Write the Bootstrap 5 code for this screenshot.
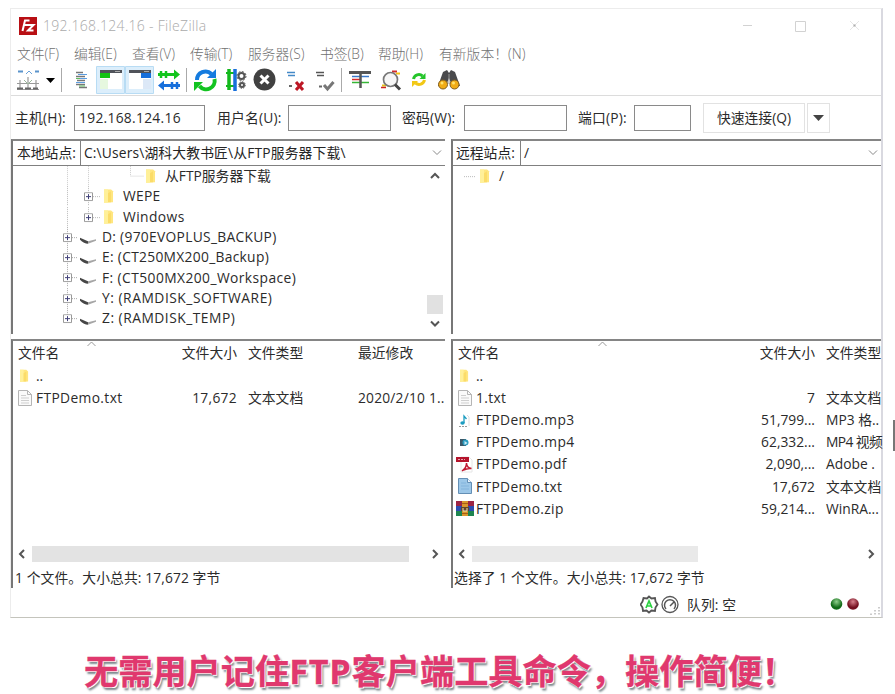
<!DOCTYPE html>
<html lang="zh-CN">
<head>
<meta charset="utf-8">
<meta name="viewport" content="width=device-width, initial-scale=1">
<title>FileZilla</title>
<link href="https://cdn.jsdelivr.net/npm/bootstrap@5.3.0/dist/css/bootstrap.min.css" rel="stylesheet">
<style>
body{width:895px;height:694px;overflow:hidden;background:#fff;color:#2b2b2b;font-family:"Open Sans","Noto Sans CJK SC",sans-serif;font-size:13.8px;line-height:20px;white-space:nowrap}
svg{display:block;flex:none}
.stage{padding:8px 0 0 10px}
.win{width:873px;height:610px;border:1px solid #ececec;border-right:2px solid #d9d9e0;border-bottom-color:#c4c4bc}
.titlebar{height:32px;padding:2px 20px 0 8px;color:#aaa;font-weight:300;font-size:14px}
.menus{height:24px;padding:1px 0 0 6px;color:#707070;font-size:13.8px;font-weight:300}
.menus span{flex:none}
.tools{height:31px;border-bottom:1px solid #dcdcdc}
.quick{height:43px;color:#2b2b2b}
.field{border:1px solid #8a8a8a;height:26px;flex:none;padding-left:4px;line-height:23px}
.qbtn{border:1px solid #e2e2e2;height:30px;border-radius:0;padding:0;font-size:13.8px;line-height:28px;color:#2b2b2b;background:#fff}
.lp{width:434px}.rp{width:430px}
.pane{border-left:2px solid #777;border-top:2px solid #858585}
.upper{height:195px}
.lower{height:249px;margin-top:5px}
.site{height:25px;border-bottom:1px solid #808080;color:#252525}
.sitelabel{width:68px;border-right:1px solid #808080;padding-left:4px;height:25px;line-height:24px}
.treerow{height:20.3px}
.treerow span{letter-spacing:.3px}
.treerow span.wide{letter-spacing:.43px}
.listrow{height:22.1px}
.hd{height:23px;margin-bottom:1px}
.tag{color:#e0386e;font-weight:700;font-size:34.2px;line-height:44px;padding-left:84px;margin-top:31px;-webkit-text-stroke:.3px #e0386e;text-shadow:1px 1px 0 #fff,-1px 0 0 #fff,2px 3px 2px #7f8b90}
.num{text-align:right}
.thumb{background:#e3e3e3}
.fn{width:277px;letter-spacing:.35px;flex:none}
.fs{width:62px;flex:none}
.ft{margin-left:11px;flex:none}
.edge{right:0;top:420px;width:2px;height:31px;background:#777}
</style>
<script src="https://cdn.jsdelivr.net/npm/bootstrap@5.3.0/dist/js/bootstrap.bundle.min.js"></script>
</head>
<body class="position-relative">
<svg width="0" height="0" class="position-absolute">
<defs>
<symbol id="folder" viewBox="0 0 10 14"><path d="M0 0h7l2 2v11l-9 .5z" fill="#ffe680"/><path d="M0 0h4v13.5H0z" fill="#fff099"/><path d="M4 4l3-2v11H4z" fill="#fbdc69"/></symbol>
<symbol id="plus" viewBox="0 0 9 9"><path d="M.5.5h8v8h-8z" fill="#fff" stroke="#999"/><path d="M2 4.5h5M4.500 2v5" stroke="#414178"/></symbol>
<symbol id="drive" viewBox="0 0 17 8"><path d="M0 1.500l8 3.500v2.500q-4 0-8-4z" fill="#464646"/><path d="M8 5L16 3v1.500L8 7.500z" fill="#a6a6a6"/></symbol>
<symbol id="doc" viewBox="0 0 14 16"><path d="M.5.5h9l4 4v11H.5z" fill="#fafafa" stroke="#b5b5b5"/><path d="M9.500.5v4h4" fill="none" stroke="#b5b5b5"/><path d="M3 5.500h5M3 8h8M3 10.500h8M3 13h8" stroke="#cfcfcf"/></symbol>
</defs>
</svg>
<div class="stage"><div class="win">
<div class="titlebar d-flex align-items-center">
<svg width="18" height="18"><path fill="#b80f14" d="M0 0h18v18H0z"/><path d="M10.500 3.500H6L3.500 14M5 8h4M9 8h5.500L9 13.500h5.500" fill="none" stroke="#fff" stroke-width="2"/></svg>
<span style="letter-spacing:.3px;margin-left:6px">192.168.124.16 - FileZilla</span>
<svg class="ms-auto" width="118" height="14"><g fill="none" stroke="#d2d2d2"><path d="M0 6.500h9M52.500 2.500h10v10h-10z"/><path d="M107 2l9 9M116 2l-9 9" stroke="#e6e6e6"/></g><path d="M110.500 5.500h2v2h-2z" fill="#aaa"/></svg>
</div>
<div class="menus d-flex align-items-center">
<span style="width:57px">文件(F)</span><span style="width:58px">编辑(E)</span><span style="width:58px">查看(V)</span><span style="width:58px">传输(T)</span><span style="width:72px">服务器(S)</span><span style="width:58px">书签(B)</span><span style="width:61px">帮助(H)</span><span>有新版本！(N)</span>
</div>
<div class="tools">
<svg width="460" height="30" viewBox="11 65 460 30">
<g stroke="#777" fill="none"><path d="M18 71.500h5M35 71.500h4" stroke="#5b94cc" stroke-width="2"/><path d="M26 74l3-3 3 3" stroke="#68a0d8"/><path d="M17 83.500h22M17 89.500h22M20 80v9M28 77v12M36 80v9" stroke="#999" stroke-width="1.200"/><path d="M17 88.500h6M25 88.500h6M33 88.500h5" stroke="#666" stroke-width="2"/><path d="M24 80l4 4 4-4" stroke="#9ab89a"/></g>
<path d="M46 78h9l-4.500 5z" fill="#000"/>
<path d="M61.500 68v24M186.500 68v24M341.500 68v24" stroke="#aaa"/>
<path d="M76 72.500h7M76 76.500h9M77 80.500h8M76 84.500h9M79 87.500h8" stroke="#777" stroke-width="1.500"/><path d="M78 74.500h9M80 78.500h7M76 82.500h9" stroke="#5b9de0"/><path d="M76 78.500h4M79 86h6" stroke="#62bd62"/>
<path d="M96.500 66.500h28v27h-28zM125.500 66.500h28v27h-28z" fill="#dceefb" stroke="#b8dcf4"/>
<path d="M100 71h22v18h-22z" fill="#fff"/><path d="M100 70h22v3h-22z" fill="#50535a"/><path d="M100 73h10v5h-10z" fill="#13c313"/><path d="M100 79h8v10h-8z" fill="#e6f8df"/><path d="M115 71.500h5" stroke="#aaa"/>
<path d="M129 71h22v18h-22z" fill="#fff"/><path d="M129 70h22v3h-22z" fill="#50535a"/><path d="M141 73h10v5h-10z" fill="#176fdb"/><path d="M143 79h8v10h-8z" fill="#dce8f7"/><path d="M144 71.500h5" stroke="#aaa"/>
<path d="M158 73h16v-3.500l6 5-6 5V76h-16z" fill="#12c51c"/><path d="M180 84h-16v-3.500l-6 5 6 5V87h16z" fill="#176fdb"/><path d="M161 71v7M166 71v7" stroke="#12c51c" stroke-width="2.500"/><path d="M172 82v7M177 82v7" stroke="#176fdb" stroke-width="2.500"/>
<g fill="none" stroke-width="4"><path d="M197 80a8.500 8.500 0 0 1 14.500-6" stroke="#147bdf"/><path d="M214.500 79a8.500 8.500 0 0 1-15 7" stroke="#13c321"/></g><path d="M216 69v9h-9z" fill="#147bdf"/><path d="M194 91v-9h9z" fill="#13c321"/>
<path d="M229 69v21" stroke="#13b91c" stroke-width="3.500"/><path d="M226 73h8M226 86h8" stroke="#13b91c" stroke-width="2"/><path d="M235 69v22" stroke="#176fdb" stroke-width="3.500"/><g fill="none" stroke="#555"><circle cx="241.500" cy="76" r="3" stroke-width="2"/><circle cx="241.500" cy="76" r="4.500" stroke-dasharray="2 1.500"/><circle cx="242" cy="85" r="2" stroke-width="2"/><circle cx="242" cy="85" r="3.300" stroke-dasharray="1.500 1"/></g>
<circle cx="264.500" cy="79.500" r="11" fill="#414141"/><path d="M260.500 75.500l8 8M268.500 75.500l-8 8" stroke="#fff" stroke-width="3"/>
<path d="M287 72.500h8M288 75.500h7" stroke="#4389c7" stroke-width="1.300"/><path d="M289 86h3" stroke="#666" stroke-width="2"/><path d="M296 82l7 8M303 82l-7 8" stroke="#bd1725" stroke-width="3"/>
<path d="M316 72.500h8M317 75.500h7" stroke="#555" stroke-width="1.300"/><path d="M319 86.500h3" stroke="#666" stroke-width="2"/><path d="M324 85l3.500 4 6-7" fill="none" stroke="#777" stroke-width="3"/>
<path d="M349 72.500h22" stroke="#555" stroke-width="3"/><path d="M352 76.500h17" stroke="#3978c9" stroke-width="1.500"/><path d="M352 79.500h9" stroke="#d42b2b" stroke-width="1.500"/><path d="M352 82.500h17" stroke="#36b635" stroke-width="1.500"/><path d="M360.500 73v15" stroke="#555" stroke-width="2.500"/>
<path d="M392 71.500h5" stroke="#d02c2c" stroke-width="2"/><path d="M396 73.500h4" stroke="#f4c315" stroke-width="2"/><path d="M382 85.500h4" stroke="#e3c31a" stroke-width="2"/><path d="M381 87.500h5" stroke="#c22" stroke-width="1.500"/><circle cx="390.500" cy="79.500" r="7" fill="#f6f6f6" stroke="#777" stroke-width="1.700"/><path d="M395 84.500l5 5" stroke="#444" stroke-width="3"/>
<g fill="none" stroke-width="3"><path d="M413.500 79a5.500 5.500 0 0 1 9-3" stroke="#24c52a"/><path d="M424.500 80a5.500 5.500 0 0 1-9 3" stroke="#f2c815"/></g><path d="M425.500 73v6h-6z" fill="#24c52a"/><path d="M412 87v-6h6z" fill="#f2c815"/>
<path d="M443 72l4-2 2 3 2-3 4 2 5 14h-8l-3-8-3 8h-8z" fill="#4a4a4d"/><path d="M449 74v10" stroke="#999"/><circle cx="443" cy="84.500" r="4.500" fill="#f1ac16" stroke="#805d21"/><circle cx="454.500" cy="84.500" r="4.500" fill="#f1ac16" stroke="#805d21"/><circle cx="442" cy="83" r="1.500" fill="#ffe36e"/><circle cx="453.500" cy="83" r="1.500" fill="#ffe36e"/>
</svg>
</div>
<div class="quick d-flex align-items-center">
<span class="ps-1" style="width:63px;letter-spacing:.2px">主机(H):</span><span class="field" style="width:131px;letter-spacing:.3px">192.168.124.16</span>
<span style="width:83px;padding-left:12px;letter-spacing:.2px">用户名(U):</span><span class="field" style="width:103px"></span>
<span style="width:73px;padding-left:11px;letter-spacing:.2px">密码(W):</span><span class="field" style="width:103px"></span>
<span style="width:67px;padding-left:11px;letter-spacing:.2px">端口(P):</span><span class="field" style="width:57px"></span>
<button class="btn qbtn" style="width:102px;margin-left:12px">快速连接(Q)</button><button class="btn qbtn d-flex align-items-center justify-content-center" style="width:23px;margin-left:2px"><svg width="11" height="6"><path d="M0 0h11L5.500 6z" fill="#444"/></svg></button>
</div>
<div class="d-flex" style="gap:6px">
<div class="lp">
 <div class="pane upper">
  <div class="site d-flex align-items-center"><span class="sitelabel">本地站点:</span><span style="padding-left:3px;letter-spacing:.15px">C:\Users\湖科大教书匠\从FTP服务器下载\</span><svg class="ms-auto" style="margin-right:3px" width="10" height="6"><path d="M1 .5l4 4 4-4" fill="none" stroke="#888"/></svg></div>
  <div class="d-flex justify-content-between">
   <div>
    <div class="treerow d-flex align-items-center"><svg width="152" height="20.300" viewBox="13 0 152 20"><path d="M67.500 0v20M88.500 0v20M130.500 0v10h14" fill="none" stroke="#ccc" stroke-dasharray="1 1"/><use href="#folder" x="146" y="3" width="10" height="14"/></svg>从FTP服务器下载</div>
    <div class="treerow d-flex align-items-center"><svg width="110" height="20.300" viewBox="13 0 110 20"><path d="M67.500 0v20M88.500 0v20M93 10.500h7" stroke="#bbb" stroke-dasharray="1 1"/><use href="#plus" x="84" y="6" width="9" height="9"/><use href="#folder" x="104" y="3" width="10" height="14"/></svg><span>WEPE</span></div>
    <div class="treerow d-flex align-items-center"><svg width="110" height="20.300" viewBox="13 0 110 20"><path d="M67.500 0v20M88.500 0v10M93 10.500h7" stroke="#bbb" stroke-dasharray="1 1"/><use href="#plus" x="84" y="6" width="9" height="9"/><use href="#folder" x="104" y="3" width="10" height="14"/></svg><span class="wide">Windows</span></div>
    <div class="treerow d-flex align-items-center"><svg width="89" height="20.300" viewBox="13 0 89 20"><path d="M67.500 0v20M72 10.500h6" stroke="#aaa" stroke-dasharray="1 1"/><use href="#plus" x="63" y="6" width="9" height="9"/><use href="#drive" x="80" y="9" width="17" height="8"/></svg><span>D: (970EVOPLUS_BACKUP)</span></div>
    <div class="treerow d-flex align-items-center"><svg width="89" height="20.300" viewBox="13 0 89 20"><path d="M67.500 0v20M72 10.500h6" stroke="#aaa" stroke-dasharray="1 1"/><use href="#plus" x="63" y="6" width="9" height="9"/><use href="#drive" x="80" y="9" width="17" height="8"/></svg><span>E: (CT250MX200_Backup)</span></div>
    <div class="treerow d-flex align-items-center"><svg width="89" height="20.300" viewBox="13 0 89 20"><path d="M67.500 0v20M72 10.500h6" stroke="#aaa" stroke-dasharray="1 1"/><use href="#plus" x="63" y="6" width="9" height="9"/><use href="#drive" x="80" y="9" width="17" height="8"/></svg><span class="wide">F: (CT500MX200_Workspace)</span></div>
    <div class="treerow d-flex align-items-center"><svg width="89" height="20.300" viewBox="13 0 89 20"><path d="M67.500 0v20M72 10.500h6" stroke="#aaa" stroke-dasharray="1 1"/><use href="#plus" x="63" y="6" width="9" height="9"/><use href="#drive" x="80" y="9" width="17" height="8"/></svg><span style="letter-spacing:.53px">Y: (RAMDISK_SOFTWARE)</span></div>
    <div class="treerow d-flex align-items-center"><svg width="89" height="20.300" viewBox="13 0 89 20"><path d="M67.500 0v10M72 10.500h6" stroke="#aaa" stroke-dasharray="1 1"/><use href="#plus" x="63" y="6" width="9" height="9"/><use href="#drive" x="80" y="9" width="17" height="8"/></svg><span style="letter-spacing:.5px">Z: (RAMDISK_TEMP)</span></div>
   </div>
   <svg width="18" height="166" viewBox="427 166 18 166"><path d="M427 295h16v19h-16z" fill="#e1e1e1"/><path d="M431 178l4-4 4 4M431 321.500l4 4 4-4" fill="none" stroke="#555" stroke-width="2"/></svg>
  </div>
 </div>
 <div class="pane lower d-flex flex-column">
  <div class="hd d-flex align-items-center position-relative"><span style="width:162px;padding-left:5px">文件名</span><span class="num" style="width:62px">文件大小</span><span style="width:111px;padding-left:11px">文件类型</span><span style="padding-left:10px">最近修改</span><svg class="position-absolute" style="left:74px;top:0" width="9" height="6"><path d="M.5 5l4-4 4 4" fill="none" stroke="#999"/></svg></div>
  <div class="listrow d-flex align-items-center"><svg width="23" height="16" viewBox="0 0 23 16"><use href="#folder" x="7" y="1" width="9" height="14"/></svg><span>..</span></div>
  <div class="listrow d-flex align-items-center"><svg width="23" height="17" viewBox="0 0 23 17"><use href="#doc" x="5" y="0" width="14" height="16"/></svg><span style="width:139px;letter-spacing:.36px;flex:none">FTPDemo.txt</span><span class="num" style="width:62px;letter-spacing:.3px;flex:none">17,672</span><span style="width:111px;padding-left:11px;flex:none">文本文档</span><span style="padding-left:10px;letter-spacing:.2px">2020/2/10 1..</span></div>
  <div class="d-flex align-items-center mt-auto" style="height:20px;padding-left:4px"><svg width="15" height="12"><path d="M7 2L3 6l4 4" fill="none" stroke="#555" stroke-width="2"/></svg><div class="thumb" style="width:377px;height:16px"></div><svg class="ms-auto me-1" width="12" height="12"><path d="M4 2l4 4-4 4" fill="none" stroke="#555" stroke-width="2"/></svg></div>
  <div class="d-flex align-items-center" style="height:24px;padding:3px 0 0 2px;letter-spacing:.1px">1 个文件。大小总共: 17,672 字节</div>
 </div>
</div>
<div class="rp">
 <div class="pane upper">
  <div class="site d-flex align-items-center"><span class="sitelabel" style="padding-left:3px">远程站点:</span><span style="padding-left:3px">/</span><svg class="ms-auto" style="margin-right:3px" width="10" height="6"><path d="M1 .5l4 4 4-4" fill="none" stroke="#888"/></svg></div>
  <div class="treerow d-flex align-items-center"><svg width="46" height="20.300" viewBox="453 0 46 20"><path d="M464 10.500h12" stroke="#bbb" stroke-dasharray="1 1"/><use href="#folder" x="480" y="3" width="10" height="14"/></svg>/</div>
 </div>
 <div class="pane lower d-flex flex-column">
  <div class="hd d-flex align-items-center position-relative"><span style="width:300px;padding-left:5px;flex:none">文件名</span><span class="num" style="width:62px;flex:none">文件大小</span><span class="ft">文件类型</span><svg class="position-absolute" style="left:145px;top:0" width="9" height="6"><path d="M.5 5l4-4 4 4" fill="none" stroke="#999"/></svg></div>
  <div class="listrow d-flex align-items-center"><svg width="23" height="16"><use href="#folder" x="7" y="1" width="9" height="14"/></svg><span>..</span></div>
  <div class="listrow d-flex align-items-center"><svg width="23" height="17"><use href="#doc" x="5" y="0" width="14" height="16"/></svg><span class="fn">1.txt</span><span class="num fs">7</span><span class="ft">文本文档</span></div>
  <div class="listrow d-flex align-items-center"><svg width="23" height="17"><path d="M11 11V4l2.500 3" fill="none" stroke="#1c9cc0" stroke-width="1.300"/><ellipse cx="9.500" cy="11" rx="2.200" ry="1.700" fill="#1c9cc0"/><path d="M6 14.500h9" stroke="#999" stroke-dasharray="2 1"/><path d="M14 3l2 2v9" fill="none" stroke="#ddd"/></svg><span class="fn">FTPDemo.mp3</span><span class="num fs">51,799...</span><span class="ft">MP3 格..</span></div>
  <div class="listrow d-flex align-items-center"><svg width="23" height="17"><path d="M7 5h6v7H7z" fill="#3b5868"/><circle cx="12.500" cy="8.500" r="3" fill="#2b9cc0"/><path d="M11.500 7l3 2-3 2z" fill="#cdeaf3"/></svg><span class="fn">FTPDemo.mp4</span><span class="num fs">62,332...</span><span class="ft" style="letter-spacing:-.6px">MP4 视频</span></div>
  <div class="listrow d-flex align-items-center"><svg width="23" height="17"><path d="M8 1h8l3 3v12H8z" fill="#fff" stroke="#e6e6e6"/><path d="M3 1h13v5H3z" fill="#b5142c"/><path d="M5 3.500h7" stroke="#e7a7b0" stroke-dasharray="2 1"/><path d="M9 15c3-2 4.500-5 4.500-8 0 3 2 5 5 5.500-4-.5-6 .5-8 1.500" fill="none" stroke="#c01831" stroke-width="1.500"/></svg><span class="fn">FTPDemo.pdf</span><span class="num fs">2,090,...</span><span class="ft">Adobe .</span></div>
  <div class="listrow d-flex align-items-center"><svg width="23" height="17"><path d="M5.500.5h9l4 4v11h-13z" fill="#9cc7e8" stroke="#648fb5"/><path d="M14.500.5v4h4" fill="#eaf5ff" stroke="#648fb5"/><path d="M8 5h5M8 8h8M8 11h8" stroke="#83b4dc"/></svg><span class="fn">FTPDemo.txt</span><span class="num fs">17,672</span><span class="ft">文本文档</span></div>
  <div class="listrow d-flex align-items-center"><svg width="23" height="17"><path d="M3 1h18v5H3z" fill="#9b2444"/><path d="M3 6h18v5H3z" fill="#2b4db1"/><path d="M3 11h18v5H3z" fill="#1d8550"/><path d="M9 1h6v15H9z" fill="#d9962d"/><path d="M8 7h8v4H8z" fill="#624529"/><path d="M10 8v3h4V8" fill="none" stroke="#f5e5b5"/><path d="M9 3.500h6M9 13.500h6" stroke="#a65d18"/></svg><span class="fn">FTPDemo.zip</span><span class="num fs">59,214...</span><span class="ft">WinRA...</span></div>
  <div class="d-flex align-items-center mt-auto" style="height:20px;padding-left:4px"><svg width="15" height="12"><path d="M7 2L3 6l4 4" fill="none" stroke="#555" stroke-width="2"/></svg><div class="thumb" style="width:226px;height:16px;background:#e9e9e9"></div><svg class="ms-auto me-1" width="12" height="12"><path d="M4 2l4 4-4 4" fill="none" stroke="#555" stroke-width="2"/></svg></div>
  <div class="d-flex align-items-center" style="height:24px;padding:3px 0 0 1px;letter-spacing:.1px">选择了 1 个文件。大小总共: 17,672 字节</div>
 </div>
</div>
</div>
<div class="d-flex align-items-center" style="height:29px;padding:4px 0 0 629px">
<svg width="40" height="20"><path d="M9 1.500l2.500 2 3.500-.5.500 3.500 2 3-2 3-.5 3.500-3.500-.5-2.500 2-2.500-2-3.500.5-.5-3.500-2-3 2-3L3.500 3l3.500.5z" fill="#fff" stroke="#555" stroke-width="1.800"/><path d="M6 13l3-7 3 7M7 11h4" fill="none" stroke="#2cd141" stroke-width="1.700"/><circle cx="30" cy="9.500" r="8" fill="#fff" stroke="#555" stroke-width="1.300"/><path d="M26 14a5.500 5.500 0 1 1 8 0M30 11l4-4" fill="none" stroke="#555" stroke-width="1.500"/></svg>
<span style="padding-left:7px;letter-spacing:.1px">队列: 空</span>
<svg class="ms-auto" width="52" height="20"><defs><radialGradient id="gg" cy=".3"><stop stop-color="#8fd08c"/><stop offset="1" stop-color="#126b18"/></radialGradient><radialGradient id="rg" cy=".3"><stop stop-color="#d8808c"/><stop offset="1" stop-color="#741020"/></radialGradient></defs><circle cx="7.500" cy="9" r="5.800" fill="url(#gg)"/><circle cx="24" cy="9" r="5.800" fill="url(#rg)"/><path d="M50 12v8M46 15v5M42 18.500v1.500" stroke="#bbb" stroke-width="1.500" stroke-dasharray="1.500 1.500"/></svg>
</div>
</div></div>
<div class="tag">无需用户记住<span style="letter-spacing:.8px">FTP</span>客户端工具命令，操作简便！</div>
<div class="edge position-absolute"></div>
</body>
</html>
